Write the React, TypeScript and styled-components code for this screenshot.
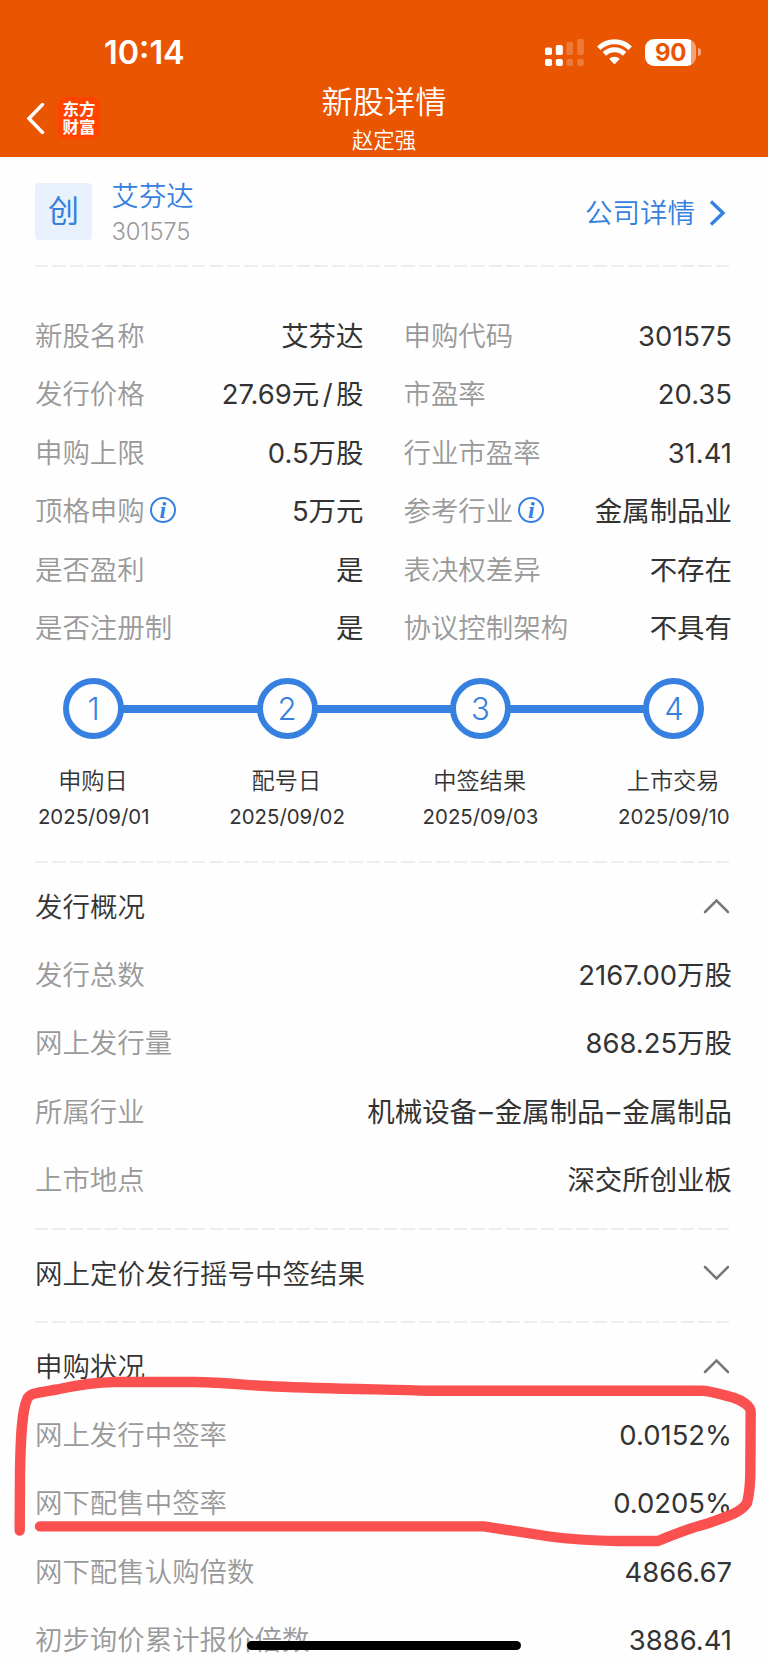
import React from 'react';
import styled, { createGlobalStyle } from 'styled-components';

const GlobalStyle = createGlobalStyle`
  * { box-sizing: border-box; }
  body {
    margin: 0;
    background: #fff;
    font-family: Inter, "Noto Sans CJK SC", sans-serif;
    color: #333;
  }
`;

const ORANGE = '#ea5502';
const BLUE = '#3680e0';

const Screen = styled.div`
  position: relative;
  width: 768px;
  height: 1665px;
  overflow: hidden;
  background: #fefefe;
`;

const Header = styled.header`
  height: 157px;
  background: ${ORANGE};
  color: #fff;
`;

const StatusBar = styled.div`
  display: flex;
  align-items: center;
  justify-content: space-between;
  height: 80px;
  padding: 24px 67px 0 104px;
`;

const Time = styled.div`
  padding-top: 2px;
  font-size: 32.4px;
  line-height: 40px;
  font-weight: 600;
`;

const Colon = styled.span`
  position: relative;
  top: -3px;
`;

const StatusIcons = styled.div`
  display: flex;
  align-items: center;
  height: 40px;
`;

const CellularIcon = styled.svg`
  width: 39px;
  height: 27px;
  margin-right: 13px;
`;

const WifiIcon = styled.svg`
  width: 35px;
  height: 26px;
  margin-right: 13px;
`;

const Battery = styled.div`
  display: flex;
  align-items: center;
  justify-content: center;
  width: 51px;
  height: 27px;
  border-radius: 9px;
  background: linear-gradient(to right, #fff 46px, #f4a379 46px);
  color: ${ORANGE};
  font-size: 24px;
  line-height: 27px;
  font-weight: 700;
  letter-spacing: -0.3px;
`;

const BatteryTip = styled.div`
  width: 3px;
  height: 8px;
  margin-left: 2px;
  border-radius: 0 3px 3px 0;
  background: #f4a379;
`;

const NavBar = styled.div`
  display: grid;
  grid-template-columns: 200px 1fr 200px;
  height: 77px;
`;

const NavLeft = styled.div`
  display: flex;
  align-items: center;
  gap: 13px;
  padding: 0 0 3px 27px;
`;

const BackIcon = styled.svg`
  width: 18px;
  height: 32px;
`;

const BrandLogo = styled.div`
  width: 42px;
  height: 42px;
  padding-top: 2px;
  border-radius: 8px;
  background: #ff4300;
  font-family: "Noto Sans CJK SC", sans-serif;
  font-size: 16.4px;
  line-height: 18px;
  font-weight: 700;
  text-align: center;
`;

const NavTitles = styled.div`
  display: flex;
  flex-direction: column;
  align-items: center;
`;

const NavTitle = styled.h1`
  margin: 3px 0 0;
  font-size: 31.2px;
  line-height: 38px;
  font-weight: 350;
`;

const NavSubtitle = styled.div`
  font-size: 21.4px;
  line-height: 38px;
  font-weight: 350;
`;

const Main = styled.main`
  padding: 0 36px 0 35px;
  font-weight: 350;
`;

const StockBar = styled.section`
  display: flex;
  align-items: center;
  height: 108px;
`;

const BoardBadge = styled.div`
  width: 57px;
  height: 57px;
  border-radius: 4px;
  background: #e9f2fc;
  color: ${BLUE};
  font-size: 31px;
  line-height: 55px;
  font-weight: 400;
  text-align: center;
`;

const StockNames = styled.div`
  flex: 1;
  padding: 5px 0 0 19.5px;
`;

const StockName = styled.div`
  color: ${BLUE};
  font-size: 27.4px;
  line-height: 35px;
`;

const StockCode = styled.div`
  color: #999;
  font-size: 23.8px;
  line-height: 35px;
  letter-spacing: -0.2px;
`;

const CompanyLink = styled.a`
  display: flex;
  align-items: center;
  gap: 14px;
  margin: 3px 6px 0 0;
  color: ${BLUE};
  font-size: 27.5px;
  line-height: 36px;
`;

const LinkArrow = styled.svg`
  width: 17px;
  height: 28px;
`;

const DashedRule = styled.div`
  width: 694px;
  height: 2px;
  background: repeating-linear-gradient(to right, #ededed 0 13.4px, transparent 13.4px 17.45px);
`;

const FactGrid = styled.section`
  display: grid;
  grid-template-columns: 328.5px 328.5px;
  column-gap: 40px;
  grid-auto-rows: 58.5px;
  padding-top: 39.5px;
`;

const Row = styled.div<{ $height?: number }>`
  display: flex;
  align-items: center;
  justify-content: space-between;
  height: ${(p) => (p.$height ? `${p.$height}px` : 'auto')};
  font-size: 27.45px;
  line-height: 36px;
`;

const Label = styled.span`
  display: flex;
  align-items: center;
  gap: 5px;
  color: #999;
  white-space: nowrap;
`;

const Value = styled.span`
  color: #333;
  font-weight: 375;
  white-space: nowrap;
`;

const Separator = styled.span<{ $wide: boolean }>`
  padding: 0 ${(p) => (p.$wide ? 3.5 : 2)}px;
`;

const InfoIcon = styled.span`
  display: flex;
  align-items: center;
  justify-content: center;
  width: 26px;
  height: 26px;
  margin-bottom: 3px;
  border: 2px solid ${BLUE};
  border-radius: 50%;
  color: ${BLUE};
  font: italic 700 24px/22px "Liberation Serif", serif;
`;

const Timeline = styled.section`
  display: grid;
  grid-template-columns: repeat(4, 193.4px);
  margin: 20.5px 0 0 -38px;
`;

const Step = styled.div`
  display: flex;
  flex-direction: column;
  align-items: center;
`;

const StepTrack = styled.div<{ $first: boolean; $last: boolean }>`
  display: flex;
  align-items: center;
  width: 100%;
  height: 61px;
  &::before,
  &::after {
    content: '';
    flex: 1;
    height: 8px;
    background: ${BLUE};
  }
  &::before {
    margin-right: -2px;
    visibility: ${(p) => (p.$first ? 'hidden' : 'visible')};
  }
  &::after {
    margin-left: -2px;
    visibility: ${(p) => (p.$last ? 'hidden' : 'visible')};
  }
`;

const StepCircle = styled.div`
  width: 61px;
  height: 61px;
  border: 6px solid ${BLUE};
  border-radius: 50%;
  color: ${BLUE};
  font-size: 31px;
  line-height: 49px;
  font-weight: 300;
  text-align: center;
`;

const StepName = styled.div`
  margin: 25px 1.5px 0 0;
  font-size: 23.2px;
  line-height: 35px;
`;

const StepDate = styled.div`
  font-size: 20.4px;
  line-height: 35px;
  font-weight: 370;
`;

const SectionTitle = styled.h2`
  margin: 0;
  color: #333;
  font-size: 27.5px;
  font-weight: 350;
`;

const Panel = styled.section<{ $top: number; $bottom: number }>`
  padding: ${(p) => p.$top}px 0 ${(p) => p.$bottom}px;
`;

const Chevron = styled.svg`
  width: 26px;
  height: 16px;
  margin: 0 3.5px 2px 0;
`;

const PenMark = styled.svg`
  position: absolute;
  left: 0;
  top: 1360px;
  width: 768px;
  height: 200px;
  pointer-events: none;
`;

const HomeIndicator = styled.div`
  position: absolute;
  left: 247px;
  bottom: 15px;
  width: 274px;
  height: 9px;
  border-radius: 5px;
  background: #000;
`;

type Fact = { label: string; value: string; info?: boolean };

const facts: Fact[] = [
  { label: '新股名称', value: '艾芬达' },
  { label: '申购代码', value: '301575' },
  { label: '发行价格', value: '27.69元/股' },
  { label: '市盈率', value: '20.35' },
  { label: '申购上限', value: '0.5万股' },
  { label: '行业市盈率', value: '31.41' },
  { label: '顶格申购', value: '5万元', info: true },
  { label: '参考行业', value: '金属制品业', info: true },
  { label: '是否盈利', value: '是' },
  { label: '表决权差异', value: '不存在' },
  { label: '是否注册制', value: '是' },
  { label: '协议控制架构', value: '不具有' },
];

const steps = [
  { name: '申购日', date: '2025/09/01' },
  { name: '配号日', date: '2025/09/02' },
  { name: '中签结果', date: '2025/09/03' },
  { name: '上市交易', date: '2025/09/10' },
];

const overview: Fact[] = [
  { label: '发行总数', value: '2167.00万股' },
  { label: '网上发行量', value: '868.25万股' },
  { label: '所属行业', value: '机械设备–金属制品–金属制品' },
  { label: '上市地点', value: '深交所创业板' },
];

const subscription: Fact[] = [
  { label: '网上发行中签率', value: '0.0152%' },
  { label: '网下配售中签率', value: '0.0205%' },
  { label: '网下配售认购倍数', value: '4866.67' },
  { label: '初步询价累计报价倍数', value: '3886.41' },
];

const PANEL_ROW = 68.4;

function FactRow({ fact, height }: { fact: Fact; height?: number }) {
  return (
    <Row $height={height}>
      <Label>
        {fact.label}
        {fact.info && <InfoIcon>i</InfoIcon>}
      </Label>
      <Value>
        {fact.value.split(/([–/])/).map((part, i) =>
          i % 2 ? (
            <Separator key={i} $wide={part === '/'}>
              {part}
            </Separator>
          ) : (
            part
          ),
        )}
      </Value>
    </Row>
  );
}

function PanelHead({ title, open }: { title: string; open: boolean }) {
  return (
    <Row $height={PANEL_ROW}>
      <SectionTitle>{title}</SectionTitle>
      <Chevron viewBox="0 0 26 16" fill="none" stroke="#777" strokeWidth="2.5" strokeLinecap="round">
        <path d={open ? 'M2 14 L13.5 2.5 L25 14' : 'M2 2 L13.5 13.5 L25 2'} />
      </Chevron>
    </Row>
  );
}

export default function App() {
  return (
    <Screen>
      <GlobalStyle />
      <Header>
        <StatusBar>
          <Time>
            10<Colon>:</Colon>14
          </Time>
          <StatusIcons>
            <CellularIcon viewBox="0 0 39 27" fill="#fff">
              <rect x="0" y="8.5" width="7" height="7.5" rx="1.8" />
              <rect x="10.8" y="6" width="7" height="10" rx="1.8" />
              <rect x="0" y="20" width="7" height="7" rx="1.8" />
              <rect x="10.8" y="20" width="7" height="7" rx="1.8" />
              <g opacity="0.22">
                <rect x="21.5" y="3" width="6.6" height="13" rx="1.8" />
                <rect x="32.2" y="0" width="6.6" height="16" rx="1.8" />
                <rect x="21.5" y="20" width="6.6" height="7" rx="1.8" />
                <rect x="32.2" y="20" width="6.6" height="7" rx="1.8" />
              </g>
            </CellularIcon>
            <WifiIcon viewBox="0 0 35 26">
              <g fill="none" stroke="#fff" strokeWidth="5">
                <path d="M1.8 9.2 A22.6 22.6 0 0 1 33.2 9.2" />
                <path d="M7.4 14.9 A14.6 14.6 0 0 1 27.6 14.9" />
              </g>
              <path d="M12.2 19.8 A7.7 7.7 0 0 1 22.8 19.8 L18.2 24.7 Q17.5 25.3 16.8 24.7 Z" fill="#fff" />
            </WifiIcon>
            <Battery>90</Battery>
            <BatteryTip />
          </StatusIcons>
        </StatusBar>
        <NavBar>
          <NavLeft>
            <BackIcon viewBox="0 0 18 32" fill="none" stroke="#fff" strokeWidth="3.4" strokeLinecap="round">
              <path d="M15.5 2.5 L2 16.5 L15.5 30.5" />
            </BackIcon>
            <BrandLogo>
              东方
              <br />
              财富
            </BrandLogo>
          </NavLeft>
          <NavTitles>
            <NavTitle>新股详情</NavTitle>
            <NavSubtitle>赵定强</NavSubtitle>
          </NavTitles>
        </NavBar>
      </Header>

      <Main>
        <StockBar>
          <BoardBadge>创</BoardBadge>
          <StockNames>
            <StockName>艾芬达</StockName>
            <StockCode>301575</StockCode>
          </StockNames>
          <CompanyLink>
            公司详情
            <LinkArrow viewBox="0 0 17 28" fill="none" stroke={BLUE} strokeWidth="3.4">
              <path d="M2 2.5 L14 14 L2 25.5" />
            </LinkArrow>
          </CompanyLink>
        </StockBar>
        <DashedRule />

        <FactGrid>
          {facts.map((fact) => (
            <FactRow key={fact.label} fact={fact} />
          ))}
        </FactGrid>

        <Timeline>
          {steps.map((step, i) => (
            <Step key={step.name}>
              <StepTrack $first={i === 0} $last={i === steps.length - 1}>
                <StepCircle>{i + 1}</StepCircle>
              </StepTrack>
              <StepName>{step.name}</StepName>
              <StepDate>{step.date}</StepDate>
            </Step>
          ))}
        </Timeline>

        <Panel $top={27} $bottom={0}>
          <DashedRule />
        </Panel>
        <Panel $top={9.5} $bottom={13.5}>
          <PanelHead title="发行概况" open />
          {overview.map((fact) => (
            <FactRow key={fact.label} fact={fact} height={PANEL_ROW} />
          ))}
        </Panel>
        <DashedRule />
        <Panel $top={10} $bottom={13}>
          <PanelHead title="网上定价发行摇号中签结果" open={false} />
        </Panel>
        <DashedRule />
        <Panel $top={9} $bottom={0}>
          <PanelHead title="申购状况" open />
          {subscription.map((fact) => (
            <FactRow key={fact.label} fact={fact} height={PANEL_ROW} />
          ))}
        </Panel>
      </Main>

      <PenMark viewBox="0 1360 768 200" fill="none" stroke="#fb5050" strokeWidth="10.4" strokeLinecap="round" strokeLinejoin="round">
        <path d="M19.7 1530.5 L20 1475 C20.5 1440 21.5 1412 27 1399.5 C29.5 1393 36 1393 57 1389.5 C75 1385.5 95 1382.3 115 1382 L195 1382 C225 1382.5 250 1385.5 275 1386.5 C330 1389 400 1389.5 428 1390.8 L702 1390.8 C712 1391 722 1395 733 1397.5 C742 1400.5 751 1406 750.7 1412 L750.3 1475 C750 1488 749 1495 747 1503 C740 1514 722 1518 706 1524 C690 1528 675 1534 658 1541 L617 1541 C590 1540.5 560 1538.5 540 1535 C520 1532 500 1529 484 1526.4 L40 1526.4" />
      </PenMark>
      <HomeIndicator />
    </Screen>
  );
}
